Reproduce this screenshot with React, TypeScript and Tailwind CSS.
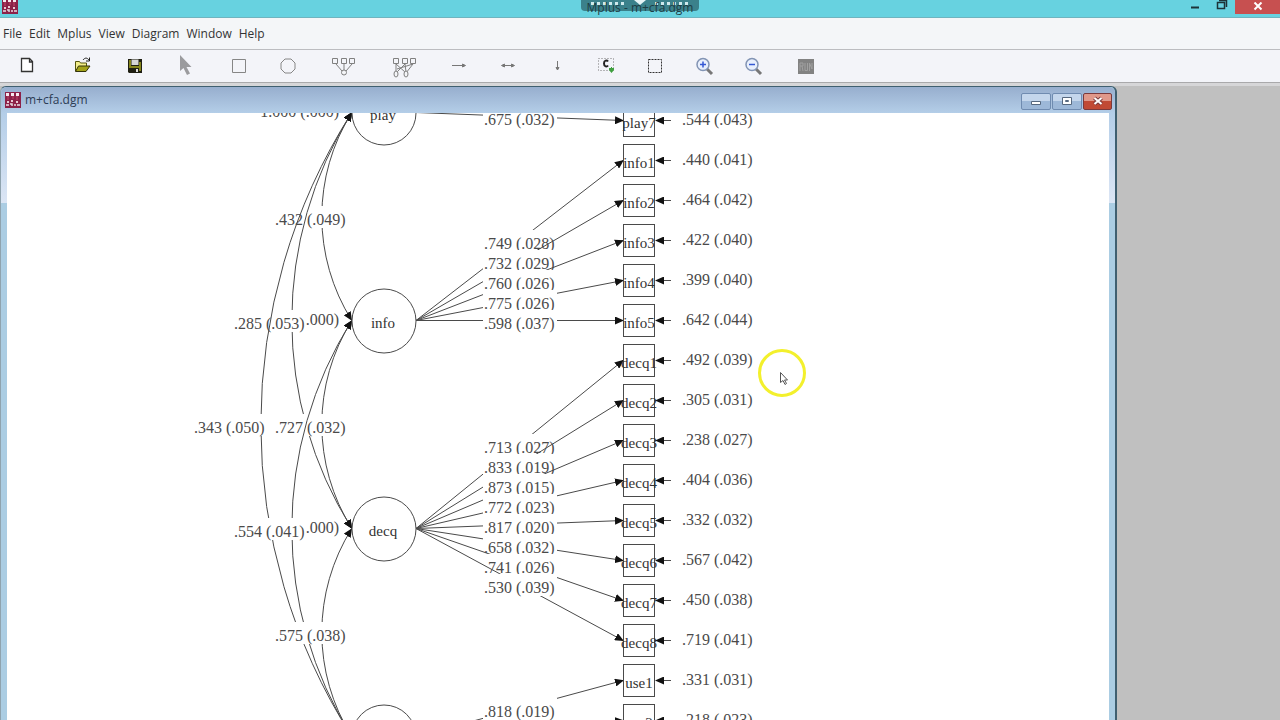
import type { ReactNode } from "react";

interface Indicator {
  name: string;
  y: number; // centre of the indicator box
  residual: string;
  loading?: string;
  labelY?: number; // baseline of the loading label
}

interface Factor {
  name: string;
  y: number;
  variance?: string;
  indicators: Indicator[];
}

const factors: Factor[] = [
  {
    name: "play",
    y: 112,
    variance: "1.000 (.000)",
    indicators: [
      { name: "play7", y: 120, residual: ".544 (.043)", loading: ".675 (.032)", labelY: 125 },
    ],
  },
  {
    name: "info",
    y: 320,
    variance: ".000)",
    indicators: [
      { name: "info1", y: 160, residual: ".440 (.041)", loading: ".749 (.028)", labelY: 249 },
      { name: "info2", y: 200, residual: ".464 (.042)", loading: ".732 (.029)", labelY: 269 },
      { name: "info3", y: 240, residual: ".422 (.040)", loading: ".760 (.026)", labelY: 289 },
      { name: "info4", y: 280, residual: ".399 (.040)", loading: ".775 (.026)", labelY: 309 },
      { name: "info5", y: 320, residual: ".642 (.044)", loading: ".598 (.037)", labelY: 329 },
    ],
  },
  {
    name: "decq",
    y: 528,
    variance: ".000)",
    indicators: [
      { name: "decq1", y: 360, residual: ".492 (.039)", loading: ".713 (.027)", labelY: 453 },
      { name: "decq2", y: 400, residual: ".305 (.031)", loading: ".833 (.019)", labelY: 473 },
      { name: "decq3", y: 440, residual: ".238 (.027)", loading: ".873 (.015)", labelY: 493 },
      { name: "decq4", y: 480, residual: ".404 (.036)", loading: ".772 (.023)", labelY: 513 },
      { name: "decq5", y: 520, residual: ".332 (.032)", loading: ".817 (.020)", labelY: 533 },
      { name: "decq6", y: 560, residual: ".567 (.042)", loading: ".658 (.032)", labelY: 553 },
      { name: "decq7", y: 600, residual: ".450 (.038)", loading: ".741 (.026)", labelY: 573 },
      { name: "decq8", y: 640, residual: ".719 (.041)", loading: ".530 (.039)", labelY: 593 },
    ],
  },
  {
    name: "use",
    y: 736,
    indicators: [
      { name: "use1", y: 680, residual: ".331 (.031)", loading: ".818 (.019)", labelY: 717 },
      { name: "use2", y: 720, residual: ".218 (.023)" },
    ],
  },
];

// drawn in this order, each label wipes out what lies under it
const covariances = [
  { from: 112, to: 320, bow: 30, value: ".432 (.049)", x: 275 },
  { from: 112, to: 528, bow: 60, value: ".285 (.053)", x: 234 },
  { from: 112, to: 736, bow: 91, value: ".343 (.050)", x: 194 },
  { from: 320, to: 528, bow: 30, value: ".727 (.032)", x: 275 },
  { from: 320, to: 736, bow: 60, value: ".554 (.041)", x: 234 },
  { from: 528, to: 736, bow: 30, value: ".575 (.038)", x: 275 },
];

const INK = "#4a4a4a";

function Value({ x, y, width = 73, children }: { x: number; y: number; width?: number; children: ReactNode }) {
  return (
    <>
      <rect x={x - 1} y={y - 19} width={width} height={22} fill="#fff" />
      <text x={x} y={y} className="text-[16px]" fill={INK}>
        {children}
      </text>
    </>
  );
}

function Diagram() {
  return (
    <svg
      className="block h-full w-full font-['Liberation_Serif',serif]"
      role="img"
      aria-label="Confirmatory factor analysis diagram"
    >
      <defs>
        <marker id="head" markerWidth="10" markerHeight="8" refX="8" refY="4" orient="auto-start-reverse" markerUnits="userSpaceOnUse">
          <path d="M0 0L9 4L0 8z" fill="#111" />
        </marker>
      </defs>
      {/* scroll position of the canvas */}
      <g transform="translate(-7 -113)" fill="none" stroke="none">
        {covariances.map((c) => {
          const half = (c.to - c.from) / 2;
          const r = (half * half + c.bow * c.bow) / (2 * c.bow);
          return (
            <g key={`${c.from}-${c.to}`}>
              <path
                d={`M351.5 ${c.from + 1}A${r} ${r} 0 0 0 351.5 ${c.to}`}
                stroke={INK}
                markerStart="url(#head)"
                markerEnd="url(#head)"
              />
              <Value x={c.x} y={c.from + half + 9}>
                {c.value}
              </Value>
            </g>
          );
        })}

        {factors.map((f) => (
          <g key={f.name}>
            {f.variance && (
              <text x={339} y={f.y + 5} textAnchor="end" className="text-[16px]" fill={INK}>
                {f.variance}
              </text>
            )}
            <circle cx={384} cy={f.y + 1} r={32} stroke={INK} fill="#fff" />
            <text x={383} y={f.y + 8} textAnchor="middle" className="text-[15px]" fill="#333">
              {f.name}
            </text>
            {f.indicators.map((n) => (
              <g key={n.name}>
                <path d={`M416 ${f.y + 0.5}L623 ${n.y + 0.5}`} stroke={INK} markerEnd="url(#head)" />
                {n.loading && n.labelY && (
                  <Value x={484} y={n.labelY} width={74}>
                    {n.loading}
                  </Value>
                )}
              </g>
            ))}
          </g>
        ))}

        {factors.flatMap((f) => f.indicators).map((n) => (
          <g key={n.name}>
            <rect x={623.5} y={n.y - 15.5} width={31} height={32} stroke={INK} />
            <text x={639} y={n.y + 8} textAnchor="middle" className="text-[15px]" fill="#333">
              {n.name}
            </text>
            <path d={`M671 ${n.y + 0.5}H656`} stroke={INK} markerEnd="url(#head)" />
            <text x={682} y={n.y + 5} className="text-[16px]" fill={INK}>
              {n.residual}
            </text>
          </g>
        ))}
      </g>
    </svg>
  );
}

function MplusIcon() {
  return (
    <svg width="16" height="16" viewBox="0 0 16 16" className="shrink-0">
      <rect width="16" height="16" fill="#8c2148" />
      <path d="M1 1h3v3H1zM6 1h3v3H6zM11 1h3v3h-3z" fill="#f6e8ee" />
      <path d="M3 4v4M8 4v3M12 4v4" stroke="#c0486a" />
      <path d="M2 9h2v2H2zM6 8h2v2H6zM11 9h2v2h-2z" fill="#e9c9d4" />
      <path d="M1 13h3M5 12h2v2M9 13h2M12 13h3" stroke="#eadbe4" strokeWidth="1.5" />
    </svg>
  );
}

const icons: Record<string, ReactNode> = {
  New: <path d="M5.500 4.500h8l3 3v10h-11zM13.500 4.500v3.500h3" fill="#fff" stroke="#333" strokeWidth="1.300" />,
  Open: (
    <>
      <path d="M3.500 17V7.500h4l1 1.500h6v3" fill="#f3ee8b" stroke="#55550e" />
      <path d="M3.500 17.500l3-5.500h11.500l-4 5.500z" fill="#a3a31a" stroke="#33330a" />
      <path d="M11 6c2-2.500 4-2.500 6 0M17.500 3.500V7H14" fill="none" stroke="#222" />
    </>
  ),
  Save: (
    <>
      <path d="M4 5h14v14H5l-1-1z" fill="#1f1f12" />
      <path d="M5 6h2v8H5zM15 8h2v9h-2zM7 12h8v2H7z" fill="#85851c" />
      <path d="M7.500 5.500h7V11h-7z" fill="#d5d5d5" />
      <path d="M12 15h2v3h-2z" fill="#ddd" />
    </>
  ),
  Select: <path d="M5 1v16l3.500-3 3.500 7 3-1.500-3.500-6.500h5z" fill="#9b9b9e" />,
  Rectangle: <path d="M5.500 5.500h13v13h-13z" fill="none" stroke="#868686" />,
  Circle: <path d="M9 5h6l4 4v6l-4 4H9l-4-4V9z" fill="none" stroke="#868686" strokeLinejoin="round" />,
  Measurement: (
    <>
      <path d="M1.500 4.500h5v5h-5zM10.500 4.500h5v5h-5zM18.500 4.500h5v5h-5zM5 10l6 7M13 10v6M21 10l-6 7" fill="none" stroke="#808080" />
      <circle cx="13" cy="18.500" r="2.500" fill="#f4f5f8" stroke="#808080" />
    </>
  ),
  Structural: (
    <>
      <path d="M1.500 4.500h5v5h-5zM10.500 4.500h5v5h-5zM18.500 4.500h5v5h-5zM4 10v8M4 10l9 8M13 10l-8 8M21 10l-16 5M21 10l-7 9M13 10l1 8" fill="none" stroke="#808080" />
      <ellipse cx="4" cy="20" rx="2" ry="3" fill="#f4f5f8" stroke="#808080" />
      <ellipse cx="14" cy="20" rx="2" ry="3" fill="#f4f5f8" stroke="#808080" />
    </>
  ),
  Path: <path d="M5 11.500h12M15.500 10l3 1.500-3 1.500z" fill="#777" stroke="#777" />,
  Covariance: <path d="M8 11.500h8M8.500 10L5.500 11.500l3 1.500zM15.500 10l3 1.500-3 1.500z" fill="#777" stroke="#777" />,
  Residual: <path d="M12.500 7v7M11 13.500h3l-1.500 2.500z" fill="#777" stroke="#777" />,
  "Latent class": (
    <>
      <path d="M4.500 4.500h15v12h-15z" fill="none" stroke="#777" strokeDasharray="1 2" />
      <path d="M14 7.500c-1-1.500-4-1.500-4 2s3 3.500 4 2" fill="none" stroke="#222" strokeWidth="2" />
      <path d="M15 14h2v-1h1v1h2v2l-2.500 3-2.500-3z" fill="#3fa03f" />
    </>
  ),
  Marquee: <path d="M5.500 5.500h13v13h-13z" fill="none" stroke="#333" strokeDasharray="2 1" />,
  "Zoom in": (
    <>
      <path d="M15 15l5 5" stroke="#777" strokeWidth="3" />
      <circle cx="11" cy="10.500" r="6" fill="#e8effd" stroke="#8294b4" strokeWidth="1.500" />
      <path d="M8 10.500h6M11 7.500v6" stroke="#3458d4" strokeWidth="1.500" />
    </>
  ),
  "Zoom out": (
    <>
      <path d="M15 15l5 5" stroke="#777" strokeWidth="3" />
      <circle cx="11" cy="10.500" r="6" fill="#e8effd" stroke="#8294b4" strokeWidth="1.500" />
      <path d="M8 10.500h6" stroke="#3458d4" strokeWidth="1.500" />
    </>
  ),
  Run: (
    <>
      <path d="M5 5h16v15H5z" fill="#828282" />
      <path d="M7 17V9h3v3H7M9 12l1 5M12 9v7.500h2.500V9M16.500 17V9l2.500 6V9" fill="none" stroke="#a0a0a0" />
    </>
  ),
};

const tools = [
  { name: "New", width: "w-14" },
  { name: "Open", width: "w-14" },
  { name: "Save", width: "w-12" },
  { name: "Select", width: "w-[54px]" },
  { name: "Rectangle", width: "w-[49px]" },
  { name: "Circle", width: "w-[49px]" },
  { name: "Measurement", width: "w-[61px]" },
  { name: "Structural", width: "w-[61px]" },
  { name: "Path", width: "w-[49px]" },
  { name: "Covariance", width: "w-[49px]" },
  { name: "Residual", width: "w-[49px]" },
  { name: "Latent class", width: "w-[49px]" },
  { name: "Marquee", width: "w-[49px]" },
  { name: "Zoom in", width: "w-[49px]" },
  { name: "Zoom out", width: "w-[49px]" },
  { name: "Run", width: "w-14" },
];

const menus = ["File", "Edit", "Mplus", "View", "Diagram", "Window", "Help"];

function TitleBar() {
  return (
    <header className="relative flex h-[18px] shrink-0 items-start justify-between overflow-hidden border-b border-[#6fb4bf] bg-[#67d2e0]">
      <div className="-mt-[2px] ml-[2px]">
        <MplusIcon />
      </div>
      {/* remote session handle */}
      <div className="absolute top-0 left-1/2 flex h-[11px] w-[118px] -translate-x-1/2 justify-center rounded-b bg-[#3b818b]">
        <svg width="108" height="8" viewBox="0 0 108 8">
          <path d="M5 3.500h34M69 3.500h34" stroke="#cfe9ec" strokeWidth="3" strokeDasharray="3 3" />
          <path d="M48 0h12l-6 5z" fill="#e6f4f6" />
        </svg>
      </div>
      <h1 className="pointer-events-none absolute inset-x-0 top-0 text-center text-[12px] leading-4 text-[#1d3d44]">
        Mplus - m+cfa.dgm
      </h1>
      <div className="relative flex h-[14px]">
        <button aria-label="Minimize" className="flex w-[27px] items-center justify-center">
          <svg width="10" height="14"><path d="M1 7.500h8" stroke="#1d3338" strokeWidth="2" /></svg>
        </button>
        <button aria-label="Restore" className="flex w-[27px] items-center justify-center">
          <svg width="12" height="14">
            <path d="M1.500 2.500h7v6h-7zM3 0.500h7.500V7" fill="none" stroke="#1d3338" strokeWidth="1.500" />
          </svg>
        </button>
        <button aria-label="Close" className="flex w-[45px] items-center justify-center bg-[#c75050]">
          <svg width="10" height="10"><path d="M1.500 0.500l7 7M8.500 0.500l-7 7" stroke="#fff" strokeWidth="2" /></svg>
        </button>
      </div>
    </header>
  );
}

function ChildWindow() {
  const glass =
    "flex h-[17px] w-[30px] items-center justify-center rounded-[2px] border border-[#6f8bb0] bg-linear-to-b from-[#c4d6ec] from-50% to-[#9db8d8] to-50%";
  return (
    <section className="mr-[163px] flex min-h-0 flex-1 flex-col rounded-t-md border-t border-r-2 border-l border-[#3f5f70] border-l-[#8fa3ae] bg-[#abcde3]">
      <div className="flex h-[26px] shrink-0 items-center rounded-t-md bg-linear-to-b from-[#97aece] to-[#b4cee8] pr-[3px] pl-1">
        <MplusIcon />
        <h2 className="ml-1 flex-1 text-[12px] text-[#2c3c55]">m+cfa.dgm</h2>
        <div className="flex gap-px pt-[2px]">
          <button aria-label="Minimize diagram" className={glass}>
            <svg width="12" height="12"><path d="M1.500 6.500h9v3h-9z" fill="#fff" stroke="#56687f" /></svg>
          </button>
          <button aria-label="Maximize diagram" className={glass}>
            <svg width="12" height="12">
              <path d="M1.500 2.500h9v7h-9z" fill="#fff" stroke="#56687f" />
              <path d="M4.500 5.500h3v1h-3z" fill="none" stroke="#56687f" />
            </svg>
          </button>
          <button
            aria-label="Close diagram"
            className="flex h-[17px] w-[29px] items-center justify-center rounded-[2px] border border-[#7b3a3c] bg-linear-to-b from-[#e0988a] from-50% to-[#c14a35] to-50%"
          >
            <svg width="12" height="12">
              <path d="M2.500 3l7 6M9.500 3l-7 6" stroke="#7b3a3c" strokeWidth="4" />
              <path d="M2.500 3l7 6M9.500 3l-7 6" stroke="#fff" strokeWidth="2" />
            </svg>
          </button>
        </div>
      </div>
      <div className="flex min-h-0 flex-1 bg-linear-to-b from-[#b4cee8] to-[#dce6f5] to-[90px] bg-[length:100%_90px] bg-no-repeat pr-[6px] pl-[6px]">
        <div className="min-w-0 flex-1 overflow-hidden bg-white">
          <Diagram />
        </div>
      </div>
    </section>
  );
}

export default function App() {
  return (
    <div className="relative flex h-screen flex-col overflow-hidden bg-[#c0c0c0] font-['Open_Sans','Noto_Sans',sans-serif]">
      <TitleBar />
      <nav className="flex h-8 shrink-0 items-center gap-[7px] border-b border-[#bcbdc0] bg-[#f4f6f8] pt-px pl-[3px] text-[12px] text-[#333]">
        {menus.map((menu) => (
          <button key={menu}>{menu}</button>
        ))}
      </nav>
      <div className="flex h-[33px] shrink-0 items-center border-b border-[#a9a9ab] bg-[#f3f4f9]">
        {tools.map((tool) => (
          <button key={tool.name} aria-label={tool.name} className={`flex shrink-0 justify-center ${tool.width}`}>
            <svg width="24" height="24" viewBox="0 0 24 24">
              {icons[tool.name]}
            </svg>
          </button>
        ))}
      </div>
      <main className="flex min-h-0 flex-1 flex-col border-t-[3px] border-[#d6d6d8]">
        <ChildWindow />
      </main>
      {/* pointer with its highlight ring */}
      <div className="pointer-events-none absolute top-[349px] left-[758px] flex size-12 items-center justify-center rounded-full border-[3px] border-[#f3f02c]">
        <svg width="12" height="16" viewBox="0 0 12 16" className="mt-3 ml-1">
          <path d="M2.500 1.500v10l2.500-2 2 4 1.500-1-2-3.500h3z" fill="#fff" stroke="#555" />
        </svg>
      </div>
    </div>
  );
}
